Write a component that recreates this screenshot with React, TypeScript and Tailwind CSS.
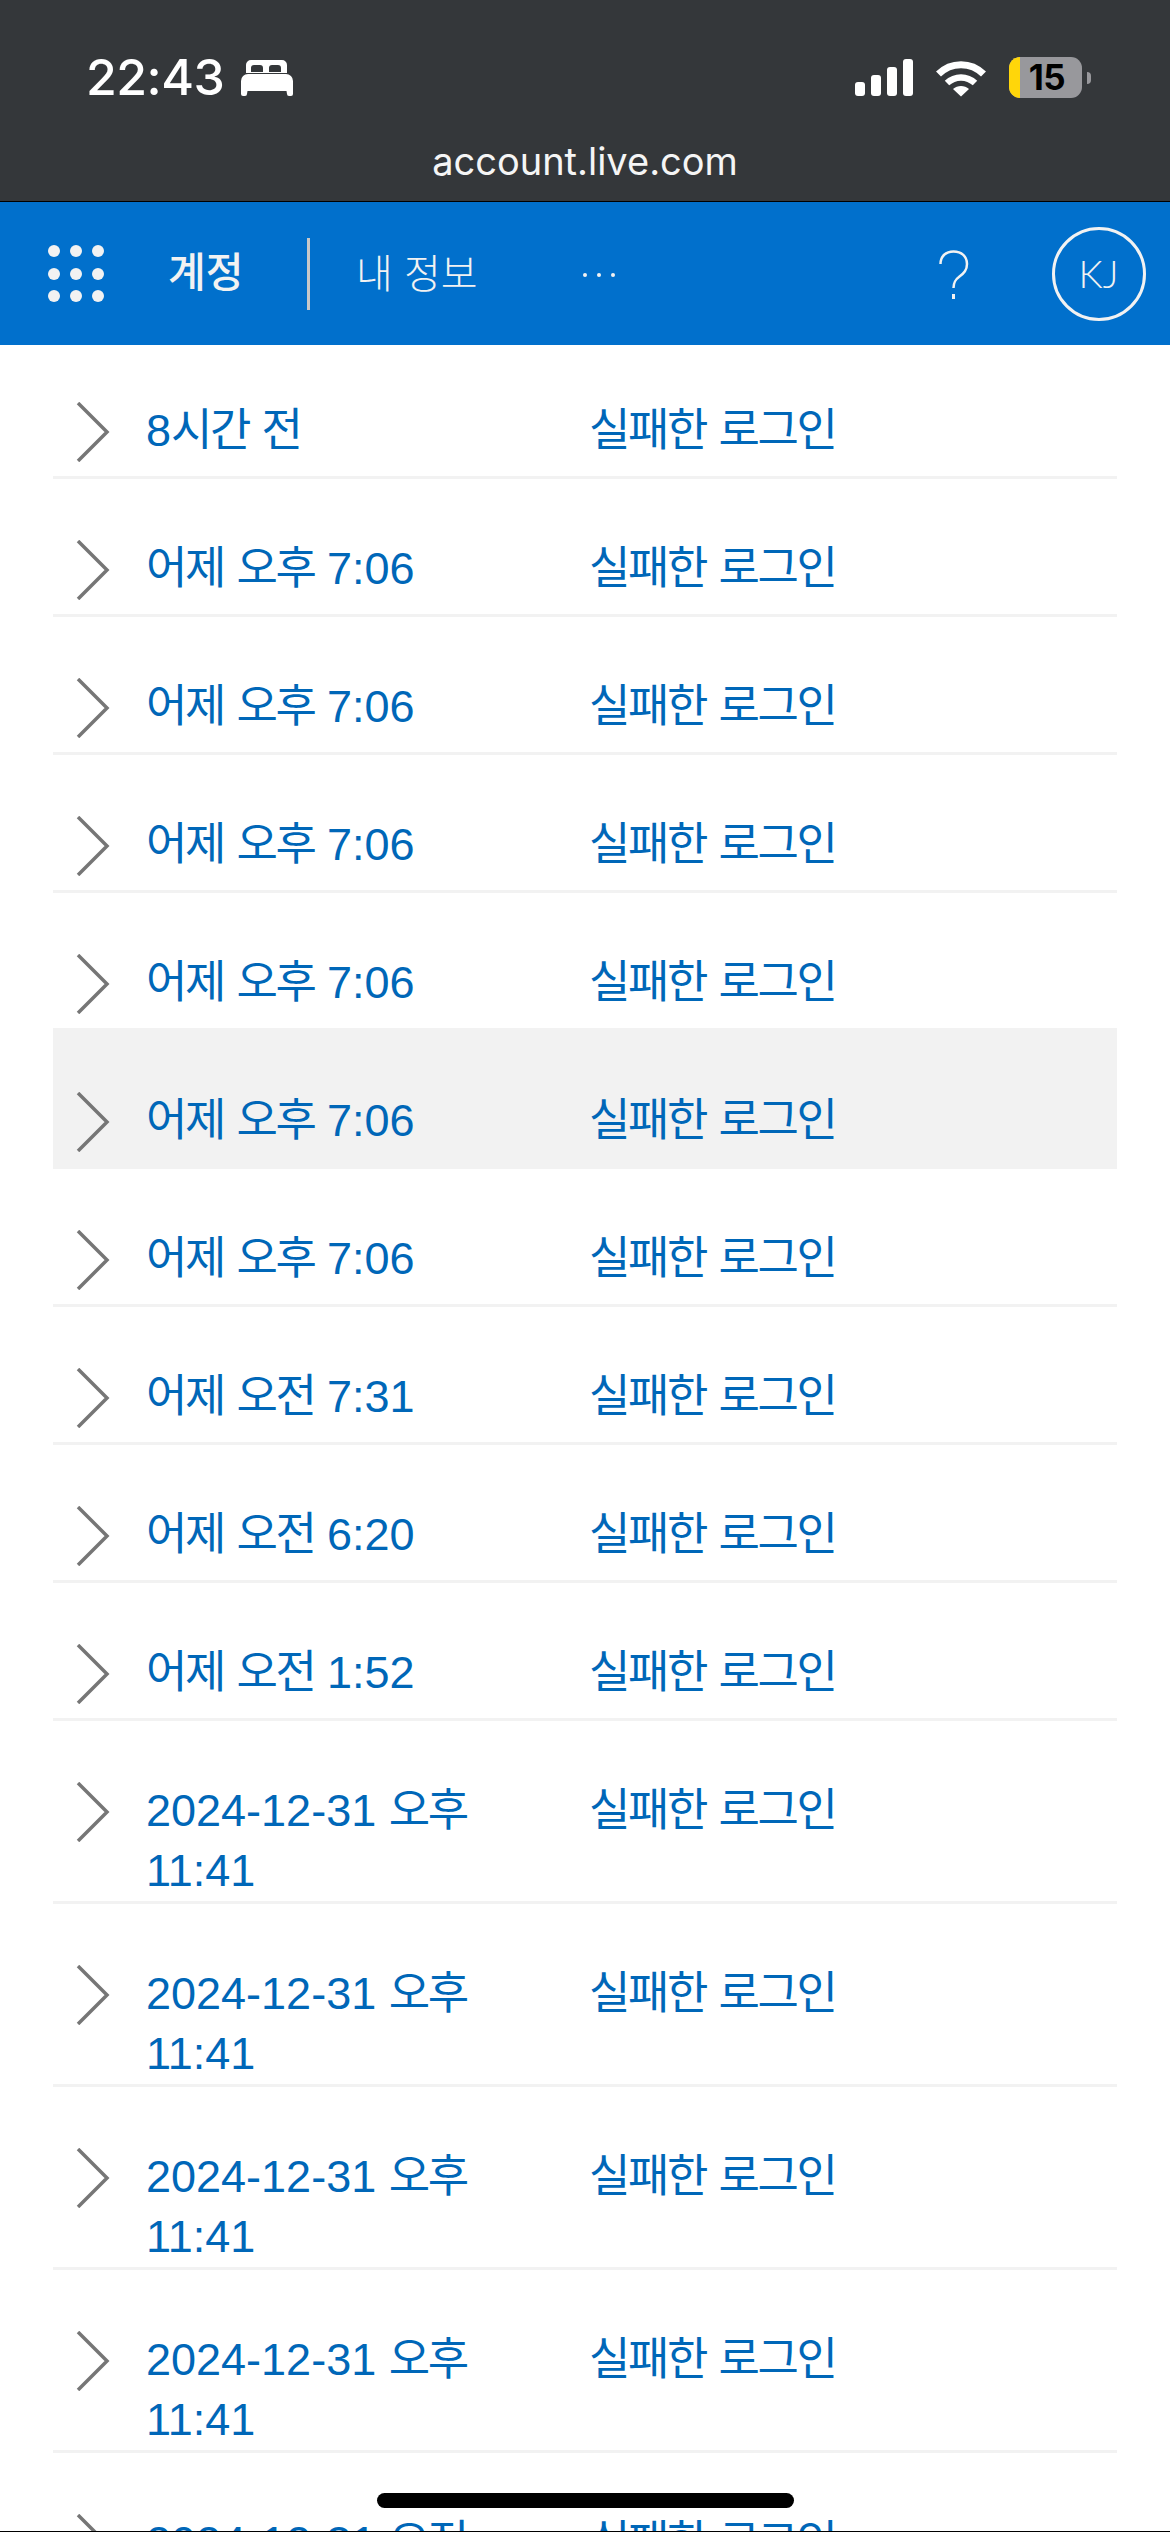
const rows: string[] = [
  "8시간 전",
  "어제 오후 7:06",
  "어제 오후 7:06",
  "어제 오후 7:06",
  "어제 오후 7:06",
  "어제 오후 7:06",
  "어제 오후 7:06",
  "어제 오전 7:31",
  "어제 오전 6:20",
  "어제 오전 1:52",
  "2024-12-31 오후 11:41",
  "2024-12-31 오후 11:41",
  "2024-12-31 오후 11:41",
  "2024-12-31 오후 11:41",
  "2024-12-31 오전 11:41",
];

function Chevron() {
  return (
    <svg width="34" height="60" viewBox="0 0 34 60" className="block" fill="none">
      <polyline points="2,1 31,30 2,59" stroke="#767676" strokeWidth="3.5" />
    </svg>
  );
}

function Ko({ text }: { text: string }) {
  const parts = text.split(/([\uac00-\ud7a3]+)/);
  return (
    <>
      {parts.map((p, i) =>
        i % 2 === 1 ? (
          <span key={i} className="tracking-[-2.4px]">
            {p}
          </span>
        ) : (
          <span key={i}>{p}</span>
        ),
      )}
    </>
  );
}

function Row({ label, active }: { label: string; active: boolean }) {
  return (
    <div
      className={`flex items-start min-h-[138px] pt-[60px] pl-[23px] border-b-[3px] border-[#f2f2f2] first:min-h-[134px] first:pt-[56px] ${
        active ? "bg-[#f2f2f2]" : "bg-white"
      }`}
    >
      <div className="w-[70px] h-[60px] shrink-0 pt-[1px]">
        <Chevron />
      </div>
      <div className="w-[443px] shrink-0 pr-[110px]">
        <Ko text={label} />
      </div>
      <div className="flex-1">
        <Ko text="실패한 로그인" />
      </div>
    </div>
  );
}

function Bed() {
  return (
    <svg width="52" height="36" viewBox="0 0 52 36" fill="#fff" className="block">
      <path
        fillRule="evenodd"
        d="M10 0 H41 a5 5 0 0 1 5 5 V13 H5 V5 a5 5 0 0 1 5 -5 Z M10 12 H22 V8 a3 3 0 0 0 -3 -3 H13 a3 3 0 0 0 -3 3 Z M28 12 H40 V8 a3 3 0 0 0 -3 -3 H31 a3 3 0 0 0 -3 3 Z"
      />
      <path d="M7 14 H45 a7 7 0 0 1 7 7 V34 a2 2 0 0 1 -2 2 H48 a2 2 0 0 1 -2 -2 L45.5 31 H6.5 L6 34 a2 2 0 0 1 -2 2 H2 a2 2 0 0 1 -2 -2 V21 a7 7 0 0 1 7 -7 Z" />
    </svg>
  );
}

function Signal() {
  return (
    <div className="flex items-end gap-[6px] h-[37px]">
      <div className="w-[10px] h-[14px] rounded-[3px] bg-white" />
      <div className="w-[10px] h-[21px] rounded-[3px] bg-white" />
      <div className="w-[10px] h-[29px] rounded-[3px] bg-white" />
      <div className="w-[10px] h-[37px] rounded-[3px] bg-white" />
    </div>
  );
}

function Wifi() {
  return (
    <svg width="52" height="38" viewBox="0 0 52 38" fill="none" className="block">
      <path d="M3.5 15 C16 2.5 36 2.5 48.5 15" stroke="#fff" strokeWidth="7" />
      <path d="M12 24 C20 16.5 32 16.5 40 24" stroke="#fff" strokeWidth="6.5" />
      <path d="M18 30 C22.5 26 29.5 26 34 30 L26 37.5 Z" fill="#fff" />
    </svg>
  );
}

function Battery() {
  return (
    <div className="flex items-center">
      <div className="relative w-[73px] h-[41px] rounded-[11px] bg-[#98989c] overflow-hidden flex items-center justify-center pl-[3px]">
        <div className="absolute left-0 top-0 bottom-0 w-[11px] bg-[#ffd60a]" />
        <span className="relative text-[35px] leading-none font-bold text-black font-['Inter',sans-serif] tracking-[-0.5px]">15</span>
      </div>
      <div className="w-[4px] h-[12px] ml-[5px] rounded-r-[4px] bg-[#98989c]" />
    </div>
  );
}

function Help() {
  return (
    <svg width="30" height="50" viewBox="0 0 30 50" fill="none" stroke="#f2f2f2" strokeWidth="2.5" className="block">
      <path d="M1.5 14 C1.5 6 7 1.5 14.5 1.5 C22.5 1.5 28 6.5 28 14 C28 20 25 23 20.5 26.5 C16.5 29.5 14.5 32 14.5 38" />
      <path d="M14.5 44 V49" strokeWidth="3" />
    </svg>
  );
}

export default function App() {
  return (
    <div className="relative w-[1170px] h-[2532px] overflow-hidden bg-white font-['Liberation_Sans','Noto_Sans_CJK_KR',sans-serif]">
      <div className="h-[201px] bg-[#34373a] pt-[57px]">
        <div className="flex items-start justify-between pl-[86px] pr-[79px] h-[41px]">
          <div className="flex items-start gap-[17px]">
            <span className="text-[50px] leading-[41px] font-medium text-white font-['Inter',sans-serif] tracking-[-0.5px]">22:43</span>
            <div className="pt-[3px]">
              <Bed />
            </div>
          </div>
          <div className="flex items-center gap-[22px]">
            <Signal />
            <Wifi />
            <Battery />
          </div>
        </div>
        <div className="mt-[40px] text-center text-[38px] leading-[46px] text-[#f5f5f5] font-['Inter',sans-serif]">account.live.com</div>
      </div>
      <div className="h-px bg-black" />
      <div className="h-[143px] bg-[#0170cc] flex items-center text-[#f2f2f2]">
        <div className="grid grid-cols-3 gap-x-[10px] gap-y-[10.5px] ml-[48px] w-[56px]">
          {Array.from({ length: 9 }).map((_, i) => (
            <div key={i} className="w-[12px] h-[12px] rounded-full bg-[#f2f2f2]" />
          ))}
        </div>
        <div className="ml-[64px] text-[41px] font-medium leading-none w-[74px] whitespace-nowrap">계정</div>
        <div className="ml-[65px] w-[3px] h-[72px] bg-[#c8c8c8]" />
        <div className="ml-[46px] text-[40px] leading-none whitespace-nowrap font-light">내 정보</div>
        <div className="ml-[105px] flex gap-[10px] pt-[2px]">
          <div className="w-[4px] h-[4px] rounded-full bg-[#f2f2f2]" />
          <div className="w-[4px] h-[4px] rounded-full bg-[#f2f2f2]" />
          <div className="w-[4px] h-[4px] rounded-full bg-[#f2f2f2]" />
        </div>
        <div className="ml-[324px] pt-[2px]">
          <Help />
        </div>
        <div className="ml-[83px] w-[94px] h-[94px] rounded-full border-[3px] border-[#f2f2f2] flex items-center justify-center text-[38px] font-light font-['Lato',sans-serif]">
          KJ
        </div>
      </div>
      <div className="mx-[53px] text-[45px] leading-[60px] text-[#0067b8]">
        {rows.map((r, i) => (
          <Row key={i} label={r} active={i === 5} />
        ))}
      </div>
      <div className="absolute left-[377px] top-[2493px] w-[417px] h-[15px] rounded-full bg-black" />
      <div className="absolute left-0 right-0 bottom-0 h-px bg-black" />
    </div>
  );
}
